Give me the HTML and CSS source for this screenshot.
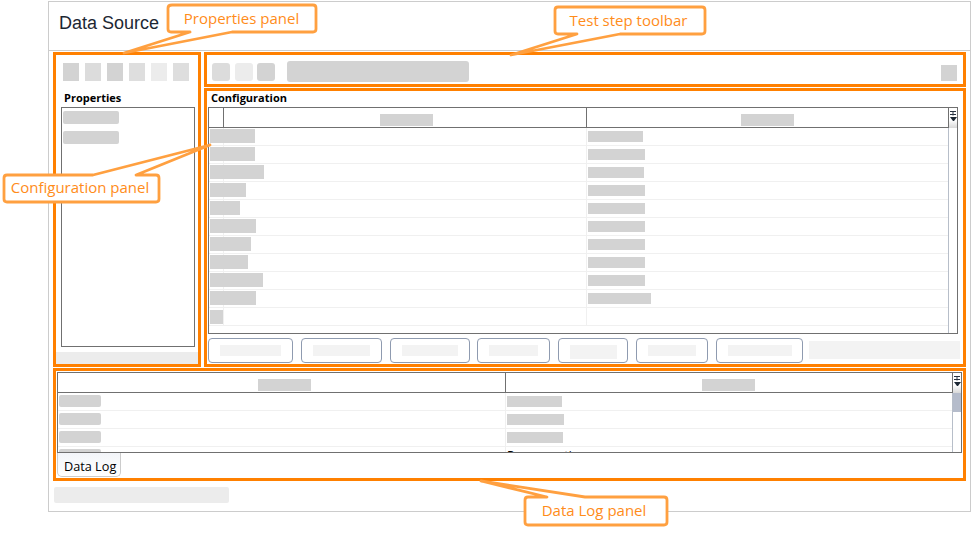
FILE: index.html
```html
<!DOCTYPE html>
<html lang="en">
<head>
<meta charset="utf-8">
<title>Data Source</title>
<link rel="stylesheet" href="styles.css">
</head>
<body>
<div class="frame">
  <header class="head"><h1 class="title">Data Source</h1></header>
  <div class="panels">
    <section class="panel props">
      <div class="prop-tools">
        <i class="sq c1"></i><i class="sq c2"></i><i class="sq c1"></i><i class="sq c3"></i><i class="sq c4"></i><i class="sq c3"></i>
      </div>
      <div class="label prop-label">Properties</div>
      <div class="prop-list">
        <i class="ph w56"></i>
        <i class="ph w56"></i>
      </div>
      <div class="prop-foot"></div>
    </section>
    <section class="panel toolbar">
      <i class="tb tb-wide c2"></i><i class="tb c4"></i><i class="tb c1"></i>
      <i class="tb-long"></i>
      <i class="tb-end"></i>
    </section>
    <section class="panel config">
      <div class="label conf-label">Configuration</div>
      <div class="table conf-table">
        <div class="cols">
          <div class="thead conf-head">
            <div class="th th-num"></div>
            <div class="th th-a"><i class="ph-h"></i></div>
            <div class="th th-b"><i class="ph-h"></i></div>
          </div>
          <div class="conf-row"><div class="td-num"><i class="ph-l" style="width:45px"></i></div><div class="td"></div><div class="td-r"><i class="ph-r" style="width:55px"></i></div></div>
          <div class="conf-row"><div class="td-num"><i class="ph-l" style="width:45px"></i></div><div class="td"></div><div class="td-r"><i class="ph-r" style="width:57px"></i></div></div>
          <div class="conf-row"><div class="td-num"><i class="ph-l" style="width:54px"></i></div><div class="td"></div><div class="td-r"><i class="ph-r" style="width:56px"></i></div></div>
          <div class="conf-row"><div class="td-num"><i class="ph-l" style="width:36px"></i></div><div class="td"></div><div class="td-r"><i class="ph-r" style="width:57px"></i></div></div>
          <div class="conf-row"><div class="td-num"><i class="ph-l" style="width:30px"></i></div><div class="td"></div><div class="td-r"><i class="ph-r" style="width:57px"></i></div></div>
          <div class="conf-row"><div class="td-num"><i class="ph-l" style="width:46px"></i></div><div class="td"></div><div class="td-r"><i class="ph-r" style="width:57px"></i></div></div>
          <div class="conf-row"><div class="td-num"><i class="ph-l" style="width:41px"></i></div><div class="td"></div><div class="td-r"><i class="ph-r" style="width:57px"></i></div></div>
          <div class="conf-row"><div class="td-num"><i class="ph-l" style="width:38px"></i></div><div class="td"></div><div class="td-r"><i class="ph-r" style="width:57px"></i></div></div>
          <div class="conf-row"><div class="td-num"><i class="ph-l" style="width:53px"></i></div><div class="td"></div><div class="td-r"><i class="ph-r" style="width:57px"></i></div></div>
          <div class="conf-row"><div class="td-num"><i class="ph-l" style="width:46px"></i></div><div class="td"></div><div class="td-r"><i class="ph-r" style="width:63px"></i></div></div>
          <div class="conf-row"><div class="td-num last"><i class="ph-l" style="width:13px"></i></div><div class="td"></div><div class="td-r"></div></div>
        </div>
        <div class="scroll">
          <div class="scroll-btn"><svg width="8" height="20" viewBox="0 0 8 20"><path class="sb-line" d="M1 3.500h6M1 6.500h6M4 3.500v4"/><path class="sb-arrow" d="M1 9h7l-3 4H4z"/></svg></div>
          <div class="scroll-track"></div>
        </div>
      </div>
      <div class="btn-row">
        <div class="btn b1"><i class="btn-ph" style="width:61px"></i></div>
        <div class="btn b2"><i class="btn-ph" style="width:57px"></i></div>
        <div class="btn b3"><i class="btn-ph" style="width:56px"></i></div>
        <div class="btn b4"><i class="btn-ph" style="width:49px"></i></div>
        <div class="btn b5"><i class="btn-ph tall" style="width:47px"></i></div>
        <div class="btn b6"><i class="btn-ph" style="width:48px"></i></div>
        <div class="btn b7"><i class="btn-ph" style="width:64px"></i></div>
        <i class="btn-end"></i>
      </div>
    </section>
    <section class="panel log">
      <div class="table log-table">
        <div class="cols">
          <div class="thead log-head">
            <div class="th th-c"><i class="ph-h"></i></div>
            <div class="th th-d"><i class="ph-h"></i></div>
          </div>
          <div class="log-row"><div class="lc"><i class="ph-s"></i></div><div class="rc"><i class="ph-r" style="width:55px"></i></div></div>
          <div class="log-row"><div class="lc"><i class="ph-s"></i></div><div class="rc"><i class="ph-r" style="width:57px"></i></div></div>
          <div class="log-row"><div class="lc"><i class="ph-s"></i></div><div class="rc"><i class="ph-r" style="width:56px"></i></div></div>
          <div class="log-row"><div class="lc"><i class="ph-s"></i></div><div class="rc cut">Response time</div></div>
        </div>
        <div class="scroll">
          <div class="scroll-btn"><svg width="8" height="20" viewBox="0 0 8 20"><path class="sb-line" d="M1 3.500h6M1 6.500h6M4 3.500v4"/><path class="sb-arrow" d="M1 9h7l-3 4H4z"/></svg></div>
          <div class="scroll-track"><div class="scroll-thumb"></div></div>
        </div>
      </div>
      <div class="tabs"><div class="tab">Data Log</div></div>
    </section>
  </div>
  <div class="foot"><i class="foot-ph"></i></div>
</div>
<svg class="notes" width="971" height="533" viewBox="0 0 971 533">
  <path class="note-shape" d="M172 5H313Q316 5 316 8V29Q316 32 313 32H232L124 53L190 32H171Q168 32 168 29V8Q168 5 172 5Z"/>
  <text class="note-text" x="241.500" y="24">Properties panel</text>
  <path class="note-shape" d="M558 7H702Q705 7 705 10V31Q705 34 702 34H620L511 55L577 34H558Q555 34 555 31V10Q555 7 558 7Z"/>
  <text class="note-text" x="628.500" y="26">Test step toolbar</text>
  <path class="note-shape" d="M7 175H93L210 145L136 175H156Q159 175 159 178V199Q159 202 156 202H7Q4 202 4 199V178Q4 175 7 175Z"/>
  <text class="note-text" x="80" y="193">Configuration panel</text>
  <path class="note-shape" d="M528 497H547L481 481L585 497H664Q667 497 667 500V522Q667 525 664 525H528Q525 525 525 522V500Q525 497 528 497Z"/>
  <text class="note-text" x="594" y="516">Data Log panel</text>
</svg>
</body>
</html>
```
FILE: styles.css
```css
html, body { margin: 0; padding: 0; background: #fff; }
body { width: 971px; height: 533px; overflow: hidden; position: relative; font-family: "Open Sans", "Liberation Sans", sans-serif; }
i { display: block; }

.frame { box-sizing: border-box; width: 923px; height: 511px; margin: 1px 0 0 48px; border: 1px solid #ccc; display: flex; flex-direction: column; }
.head { box-sizing: border-box; height: 49px; border-bottom: 1px solid #ccc; padding: 0 0 6px 10px; display: flex; align-items: center; }
.title { margin: 0; font: 400 18px "Liberation Sans", Arial, sans-serif; color: #1c2733; }

.panels { display: grid; grid-template-columns: 148px 762px; grid-template-rows: 35px 279px 113px; column-gap: 3px; row-gap: 1px; margin: 1px 0 0 4px; }
.panel { box-sizing: border-box; border: 3px solid #ff8000; min-width: 0; min-height: 0; }

.props { grid-row: 1 / 3; padding: 8px 0 0 0; height: 315px; display: flex; flex-direction: column; }
.prop-tools { display: flex; gap: 6px; padding-left: 7px; }
.sq { width: 16px; height: 18px; }
.c1 { background: #d3d3d3; }
.c2 { background: #dcdcdc; }
.c3 { background: #dedede; }
.c4 { background: #ececec; }
.label { font: 700 11px/14px "Open Sans", sans-serif; color: #000; }
.prop-label { margin: 10px 0 0 8px; }
.prop-list { box-sizing: border-box; width: 134px; height: 240px; margin: 2px 0 0 5px; border: 1px solid #707070; padding: 3px 1px; display: flex; flex-direction: column; gap: 7px; }
.ph { height: 13px; background: #d3d3d3; border-radius: 2px; }
.w56 { width: 56px; }
.prop-foot { height: 12px; margin-top: 5px; background: #ececec; }

.toolbar { display: flex; align-items: flex-start; padding: 6px 6px 0 5px; height: 35px; }
.tb { width: 18px; height: 18px; margin: 2px 4px 0 0; border-radius: 3px; }
.tb-wide { margin-right: 5px; }
.tb-long { width: 182px; height: 21px; margin-left: 8px; background: #d3d3d3; border-radius: 3px; }
.tb-end { width: 16px; height: 16px; margin: 4px 0 0 auto; background: #d3d3d3; }

.config { display: flex; flex-direction: column; grid-row: 2 / 3; }
.conf-label { margin: 0 0 0 4px; height: 16px; }
.table { box-sizing: border-box; border: 1px solid #707070; display: flex; overflow: hidden; }
.cols { flex: 1; min-width: 0; overflow: hidden; }
.conf-table { width: 750px; height: 227px; margin-left: 1px; }
.thead { display: flex; height: 20px; box-sizing: border-box; border-bottom: 1px solid #707070; }
.th { box-sizing: border-box; display: flex; justify-content: center; padding-top: 6px; }
.th-num { width: 15px; border-right: 1px solid #707070; }
.th-a { width: 363px; padding-left: 3px; border-right: 1px solid #707070; }
.th-b { flex: 1; }
.ph-h { width: 53px; height: 12px; background: #d3d3d3; }
.conf-row { display: flex; height: 18px; box-sizing: border-box; border-bottom: 1px solid #f0f0f0; }
.td-num { box-sizing: border-box; width: 15px; padding: 1px 0 0 1px; border-right: 1px solid #f0f0f0; }
.td-num.last { padding-top: 2px; }
.ph-l { height: 14px; background: #d3d3d3; }
.td { width: 363px; box-sizing: border-box; border-right: 1px solid #f0f0f0; }
.td-r { flex: 1; padding: 3px 0 0 1px; }
.ph-r { height: 11px; background: #d3d3d3; }
.scroll { width: 8px; flex: none; display: flex; flex-direction: column; border-left: 1px solid #b7bec9; }
.scroll-btn { height: 20px; margin-left: -1px; width: 9px; background: linear-gradient(#fff 60%, #d8d8d8); border-left: 1px solid #707070; box-sizing: border-box; line-height: 0; }
.sb-line { fill: none; stroke: #2a3442; stroke-width: 1; }
.sb-arrow { fill: #1c2733; }
.scroll-track { flex: 1; background: #fff; }
.scroll-thumb { height: 19px; background: #b5bccb; }

.btn-row { display: flex; align-items: flex-start; margin: 4px 0 0 1px; }
.btn { box-sizing: border-box; height: 25px; border: 1px solid #8f9bb0; border-radius: 4px; display: flex; justify-content: center; padding-top: 6px; margin-right: 8px; }
.b1 { width: 85px; }
.b2 { width: 81px; }
.b3 { width: 80px; margin-right: 7px; }
.b4 { width: 73px; }
.b5 { width: 70px; }
.b6 { width: 72px; }
.b7 { width: 87px; margin-right: 6px; }
.btn-ph { height: 11px; background: #f3f3f3; }
.tall { height: 14px; }
.btn-end { width: 151px; height: 18px; margin-top: 3px; background: #f3f3f3; }

.log { grid-column: 1 / 3; padding: 1px 0 0 1px; display: flex; flex-direction: column; width: 913px; }
.log-table { width: 905px; height: 81px; }
.th-c { width: 448px; padding-left: 6px; border-right: 1px solid #707070; }
.th-d { flex: 1; padding-right: 1px; }
.log-row { display: flex; height: 18px; box-sizing: border-box; border-bottom: 1px solid #f0f0f0; }
.lc { box-sizing: border-box; width: 448px; padding: 2px 0 0 1px; border-right: 1px solid #f0f0f0; }
.ph-s { width: 42px; height: 12px; background: #d3d3d3; border-radius: 2px; }
.rc { padding: 3px 0 0 1px; flex: 1; }
.cut { font: 400 12px/16px "Open Sans", sans-serif; color: #000; padding-top: 1px; }
.tabs { display: flex; }
.tab { box-sizing: border-box; width: 64px; height: 24px; padding-left: 6px; font: 400 12.700px/26px "Open Sans", sans-serif; color: #000; border: 1px solid #ccc; border-top: 0; border-radius: 0 0 5px 5px; background: linear-gradient(#f3f5f9, #fff); }

.foot { padding: 6px 0 0 5px; }
.foot-ph { width: 175px; height: 16px; background: #ececec; border-radius: 2px; }

.notes { position: absolute; left: 0; top: 0; pointer-events: none; }
.note-shape { fill: #fff; stroke: #ffa040; stroke-width: 2.800; stroke-linejoin: round; }
.note-text { fill: #ff8c1a; font: 400 15px "Open Sans", sans-serif; text-anchor: middle; }
```
